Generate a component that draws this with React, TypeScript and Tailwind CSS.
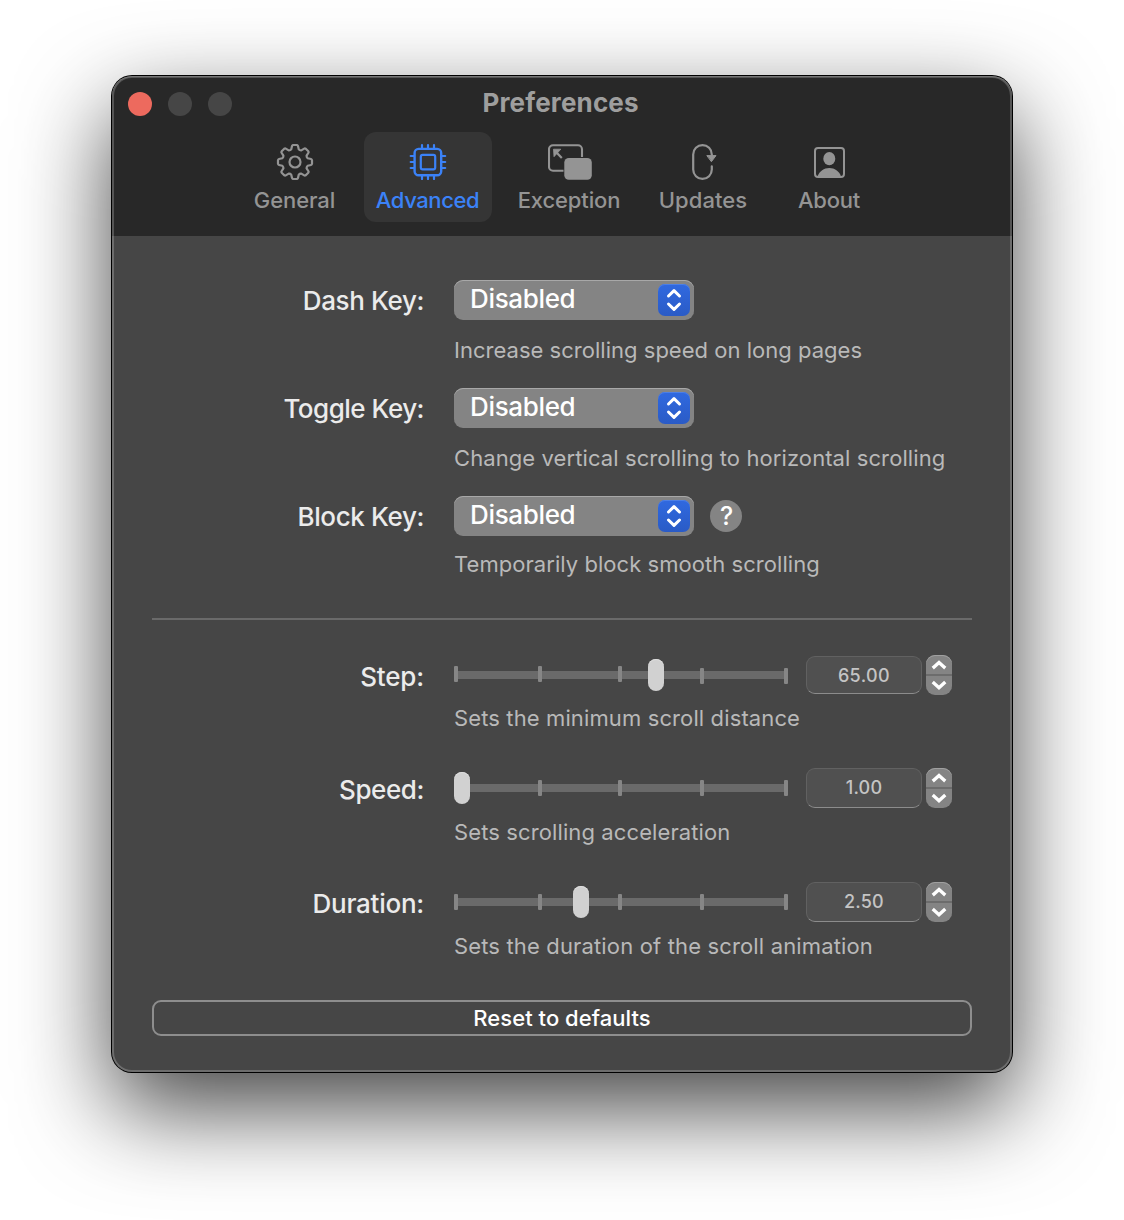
import React from "react";

function gearPath(): string {
  const pts: string[] = [];
  const at = (deg: number, r: number) => {
    const a = ((deg - 90) * Math.PI) / 180;
    return `${(22 + r * Math.cos(a)).toFixed(2)} ${(18 + r * Math.sin(a)).toFixed(2)}`;
  };
  for (let i = 0; i < 8; i++) {
    const c = i * 45;
    pts.push(`${i === 0 ? "M" : "L"}${at(c - 16.5, 13.2)}`);
    pts.push(`L${at(c - 10.5, 16.3)}`);
    pts.push(`Q${at(c - 9.5, 17)} ${at(c - 6, 17.1)}`);
    pts.push(`L${at(c + 6, 17.1)}`);
    pts.push(`Q${at(c + 9.5, 17)} ${at(c + 10.5, 16.3)}`);
    pts.push(`L${at(c + 16.5, 13.2)}`);
    pts.push(`Q${at(c + 22.5, 12.4)} ${at(c + 28.5, 13.2)}`);
  }
  return pts.join(" ") + "Z";
}

const GearIcon = () => (
  <svg width="44" height="36" viewBox="0 0 44 36" fill="none" stroke="currentColor" strokeWidth="2.2" strokeLinejoin="round">
    <path d={gearPath()} />
    <circle cx="22" cy="18" r="5.5" />
  </svg>
);

const ChipIcon = () => (
  <svg width="44" height="36" viewBox="0 0 44 36" fill="none" stroke="currentColor" strokeWidth="2.2" strokeLinecap="round">
    <rect x="8.6" y="4.9" width="26.6" height="26.4" rx="4" strokeWidth="2.4" />
    <rect x="14.8" y="10.9" width="14.4" height="14.4" rx="1.8" />
    <path d="M16 1.200v3M22 1.200v3M28 1.200v3M16 32v3M22 32v3M28 32v3M4.700 12h3M4.700 18h3M4.700 24h3M36.200 12h3M36.200 18h3M36.200 24h3" />
  </svg>
);

const ExceptionIcon = () => (
  <svg width="44" height="36" viewBox="0 0 44 36" fill="none" stroke="currentColor" strokeWidth="2.1">
    <path d="M15.500 26.700H5a4 4 0 0 1-4-4V5.200a4 4 0 0 1 4-4H30a4 4 0 0 1 4 4V13" />
    <rect x="16.300" y="14" width="27.500" height="21.700" rx="4.500" fill="currentColor" stroke="none" />
    <path d="M8.500 8.500L13.800 14" strokeWidth="2.200" />
    <path d="M5.500 5.200h7.300L6 12.700z" fill="currentColor" stroke="currentColor" strokeWidth="0.800" strokeLinejoin="round" />
  </svg>
);

const UpdatesIcon = () => (
  <svg width="44" height="36" viewBox="0 0 44 36" fill="none" stroke="currentColor" strokeWidth="2.2" strokeLinecap="round">
    <path d="M30.800 12V10.400A9.300 9.300 0 0 0 12.200 10.400V25.600A9.300 9.300 0 0 0 30.800 25.600V22.300" />
    <path d="M26.200 11.600H35L30.600 17.400z" fill="currentColor" strokeWidth="1" strokeLinejoin="round" />
  </svg>
);

const AboutIcon = () => (
  <svg width="44" height="36" viewBox="0 0 44 36" fill="none" stroke="currentColor" strokeWidth="2">
    <rect x="8" y="4" width="29" height="29" rx="3" />
    <ellipse cx="22.300" cy="14.700" rx="6" ry="6.600" fill="currentColor" stroke="none" />
    <path d="M10.500 32.500C12.500 27 17 24 22.300 24s9.800 3 11.800 8.500z" fill="currentColor" stroke="none" />
  </svg>
);

const tabs = [
  { label: "General", icon: <GearIcon />, cls: "w-[110px] text-[#949494]", text: "-ml-px tracking-[-0.08px]" },
  { label: "Advanced", icon: <ChipIcon />, cls: "w-32 bg-[#353535] text-[#3b82f7]", text: "-ml-px tracking-[-0.4px]" },
  { label: "Exception", icon: <ExceptionIcon />, cls: "w-[126px] pl-0.5 text-[#949494]", text: "-ml-0.5 tracking-[-0.12px]" },
  { label: "Updates", icon: <UpdatesIcon />, cls: "w-[114px] text-[#949494]", text: "tracking-[0.06px]" },
  { label: "About", icon: <AboutIcon />, cls: "w-[110px] text-[#949494]", text: "tracking-[-0.25px]" },
];

const keys = [
  { label: "Dash Key:", lcls: "tracking-[-0.37px]", hint: "Increase scrolling speed on long pages", hcls: "mt-[17px] tracking-[0.02px]", row: "", help: false },
  { label: "Toggle Key:", lcls: "tracking-[-0.5px]", hint: "Change vertical scrolling to horizontal scrolling", hcls: "mt-[17px] tracking-[0.09px]", row: "mt-[25px]", help: false },
  { label: "Block Key:", lcls: "tracking-[-0.37px]", hint: "Temporarily block smooth scrolling", hcls: "mt-[15px] tracking-[0.05px]", row: "mt-[25px]", help: true },
];

const sliders = [
  {
    label: "Step:", lcls: "tracking-[-0.15px]", hint: "Sets the minimum scroll distance", hcls: "mt-[10px] tracking-[0.12px]",
    row: "mt-[35px]", value: "65.00", field: "mt-px h-[38px] pt-[8px] tracking-[0.4px]", thumb: 194, ticks: [11, 11, 11, 13, 13],
  },
  {
    label: "Speed:", lcls: "tracking-[-0.4px]", hint: "Sets scrolling acceleration", hcls: "mt-[11px] tracking-[0.11px]",
    row: "mt-[37px]", value: "1.00", field: "h-10 pt-[8px] tracking-[0.2px]", thumb: 0, ticks: [12, 12, 12, 12, 12],
  },
  {
    label: "Duration:", lcls: "tracking-[-0.25px]", hint: "Sets the duration of the scroll animation", hcls: "mt-[11px] tracking-[0.15px]",
    row: "mt-[37px]", value: "2.50", field: "h-10 pt-[8px] tracking-[0.2px]", thumb: 119, ticks: [12, 12, 12, 12, 12],
  },
];

const tickX = [0, 84, 164, 246, 330];

function Select() {
  return (
    <button className="flex h-10 w-60 items-start justify-between rounded-[9px] bg-[#848484] pr-1 pl-4 text-left shadow-[inset_0_1px_0_#a8a8a8]">
      <span className="mt-[3px] text-[26px] leading-[31px] font-medium tracking-[-0.34px] text-white">Disabled</span>
      <span className="mt-1 flex size-8 items-center justify-center rounded-[7px] bg-linear-to-b from-[#3069e0] to-[#2a5bc6] shadow-[inset_0_1px_0_#4c7fe6]">
        <svg width="32" height="32" viewBox="0 0 32 32" fill="none" stroke="white" strokeWidth="3" strokeLinecap="round" strokeLinejoin="round">
          <path d="M10.500 12L16 6.700L21.500 12M10.500 20L16 25.300L21.500 20" />
        </svg>
      </span>
    </button>
  );
}

function Stepper() {
  return (
    <button className="ml-1 h-10 w-[26px] overflow-hidden rounded-[9px] bg-[#848484] shadow-[inset_0_1px_0_#a0a0a0]">
      <svg width="26" height="40" viewBox="0 0 26 40" fill="none" stroke="white" strokeWidth="3.400" strokeLinecap="square">
        <path d="M0 20H26" stroke="#6c6c6c" strokeWidth="2" strokeLinecap="butt" />
        <path d="M8 12L13 7.500L18 12M8 28.200L13 32.700L18 28.200" />
      </svg>
    </button>
  );
}

function Slider({ thumb, ticks }: { thumb: number; ticks: number[] }) {
  return (
    <div className="relative h-10 w-[334px]">
      <div className="absolute top-4 right-0.5 left-0.5 h-2 bg-[#6a6a6a]" />
      {ticks.map((top, i) => (
        <div key={i} className="absolute h-4 w-1 rounded-[1px] bg-[#868686]" style={{ left: tickX[i], top }} />
      ))}
      <div className="absolute top-1 h-8 w-4 rounded-full bg-[#d1d1d1] shadow-[inset_0_1px_0_#dedede]" style={{ left: thumb }} />
    </div>
  );
}

export default function App() {
  return (
    <div className="h-[1220px] w-[1124px] overflow-hidden bg-white px-28 pt-[76px] font-['Inter',sans-serif]">
      <div className="relative h-[996px] w-[900px] overflow-visible rounded-[20px] bg-[#464646] shadow-[0_0_0_1px_#000,0_36px_94px_rgba(0,0,0,0.74)]">
        <header className="h-40 rounded-t-[20px] bg-[#282828]">
          <div className="flex h-14 items-start pl-4">
            <div className="mt-4 flex gap-4">
              <span className="size-6 rounded-full bg-[#ed6a5e]" />
              <span className="size-6 rounded-full bg-[#464646]" />
              <span className="size-6 rounded-full bg-[#464646]" />
            </div>
            <h1 className="mt-[11px] ml-[250.500px] text-[26px] leading-[31px] font-bold tracking-[0.15px] text-[#9e9e9e]">Preferences</h1>
          </div>
          <nav className="ml-32 flex gap-3.5">
            {tabs.map((t) => (
              <button key={t.label} className={"flex h-[90px] flex-col items-center rounded-xl pt-3 " + t.cls}>
                {t.icon}
                <span className={"mt-[7px] text-[22px] leading-[26px] font-[450] " + t.text}>{t.label}</span>
              </button>
            ))}
          </nav>
        </header>

        <main className="pt-11">
          {keys.map((k) => (
            <section key={k.label} className={"grid grid-cols-[312px_1fr] gap-x-[30px] " + k.row}>
              <label className={"mt-[5px] text-right text-[26px] leading-[31px] font-[450] text-[#ebebeb] " + k.lcls}>{k.label}</label>
              <div className="flex items-center gap-4">
                <Select />
                {k.help && (
                  <button className="flex size-8 items-center justify-center rounded-full bg-[#848484] pl-px text-[25px] leading-[30px] font-[450] text-white">
                    ?
                  </button>
                )}
              </div>
              <p className={"col-start-2 text-[22px] leading-[26px] font-[430] text-[#b9b9b9] " + k.hcls}>{k.hint}</p>
            </section>
          ))}

          <hr className="mx-10 mt-[41px] h-0.5 border-0 bg-[#6a6a6a]" />

          {sliders.map((s) => (
            <section key={s.label} className={"grid grid-cols-[312px_1fr] gap-x-[30px] " + s.row}>
              <label className={"mt-1.5 text-right text-[26px] leading-[31px] font-[450] text-[#ebebeb] " + s.lcls}>{s.label}</label>
              <div className="flex h-10 items-start">
                <Slider thumb={s.thumb} ticks={s.ticks} />
                <div
                  className={
                    "ml-[18px] w-[116px] rounded-[9px] border border-[#616161] border-b-[#8c8c8c] bg-[#505050] text-center text-[18px] leading-[21px] font-[450] text-[#c4c4c4] " +
                    s.field
                  }
                >
                  {s.value}
                </div>
                <Stepper />
              </div>
              <p className={"col-start-2 text-[22px] leading-[26px] font-[430] text-[#b9b9b9] " + s.hcls}>{s.hint}</p>
            </section>
          ))}

          <button className="mx-10 mt-[41px] flex h-9 w-[820px] justify-center rounded-[9px] border-2 border-[#8e8e8e] pt-[3px] text-[22px] leading-[26px] font-medium tracking-[0.04px] text-white">
            Reset to defaults
          </button>
        </main>
        <div className="pointer-events-none absolute inset-0 rounded-[20px] shadow-[inset_0_1px_0_rgba(255,255,255,0.2),inset_0_0_0_2px_rgba(255,255,255,0.21)]" />
      </div>
    </div>
  );
}
